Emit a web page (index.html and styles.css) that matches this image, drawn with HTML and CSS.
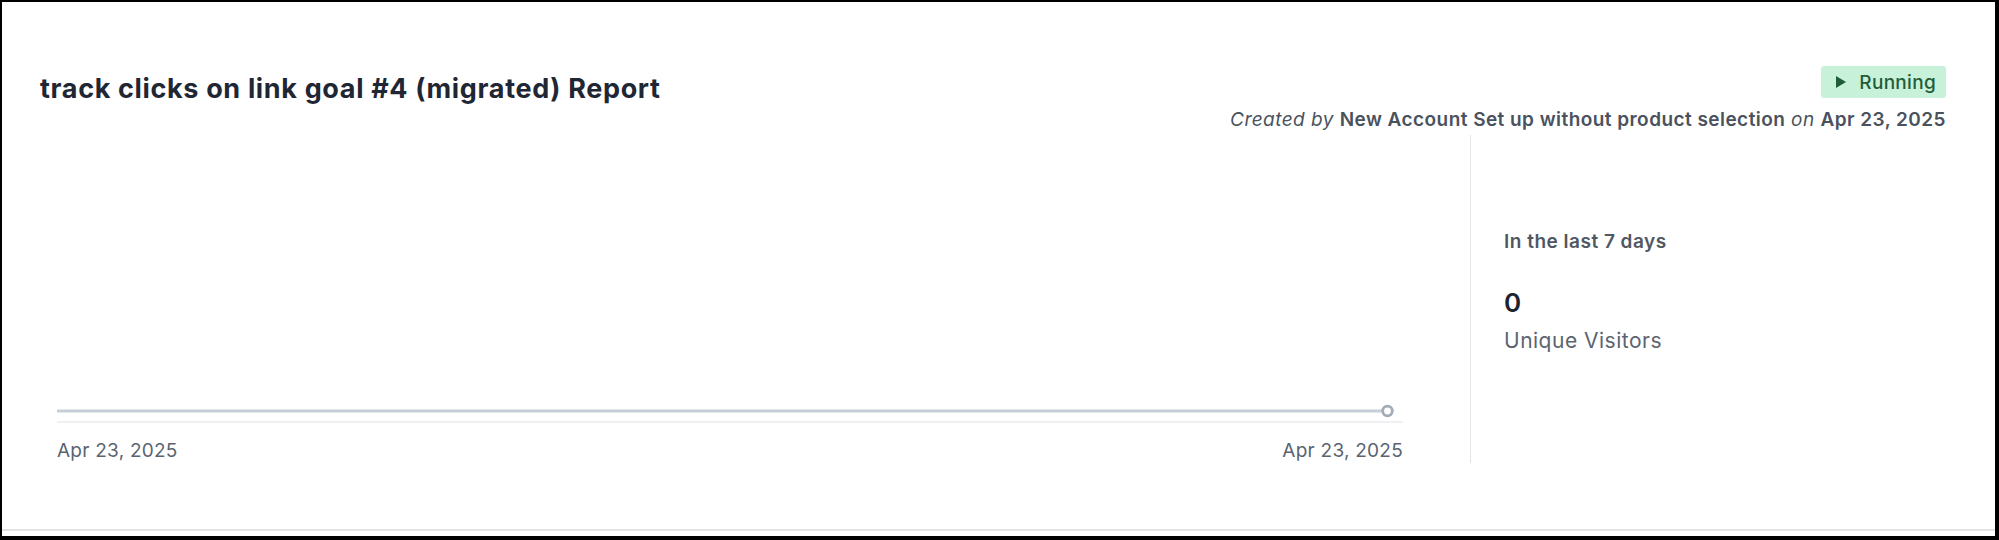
FILE: index.html
```html
<!DOCTYPE html>
<html lang="en">
<head>
<meta charset="utf-8">
<title>Report</title>
<link rel="stylesheet" href="styles.css">
</head>
<body>
<div class="frame">
  <div class="card">
    <header class="header">
      <h1 class="title">track clicks on link goal #4 (migrated) Report</h1>
      <div class="meta">
        <span class="badge">
          <svg class="badge-icon" viewBox="0 0 10 12" width="10" height="12"><path d="M0 0 L10 6 L0 12 Z" fill="currentColor"/></svg>
          Running
        </span>
        <p class="created"><em>Created by</em> <strong>New Account Set up without product selection</strong> <em>on</em> <strong>Apr 23, 2025</strong></p>
      </div>
    </header>
    <section class="body">
      <div class="chart">
        <svg class="chart-line" viewBox="0 0 1346 14" width="1346" height="14">
          <line x1="0" y1="7" x2="1325" y2="7" stroke="#c7ced7" stroke-width="3"/>
          <circle cx="1330.5" cy="7" r="4.8" fill="#fff" stroke="#a3abb6" stroke-width="2.8"/>
        </svg>
        <div class="axis"></div>
        <div class="dates">
          <span>Apr 23, 2025</span>
          <span>Apr 23, 2025</span>
        </div>
      </div>
      <div class="divider"></div>
      <aside class="stats">
        <div class="stats-label">In the last 7 days</div>
        <div class="stats-value">0</div>
        <div class="stats-name">Unique Visitors</div>
      </aside>
    </section>
  </div>
</div>
</body>
</html>
```

FILE: styles.css
```css
html, body {
  margin: 0;
  padding: 0;
  background: #000;
}
body {
  font-family: Inter, "Liberation Sans", sans-serif;
  width: 1999px;
  height: 540px;
  overflow: hidden;
}
.frame {
  margin: 2px 4px 0 2px;
  height: 534px;
  background: #fff;
  padding-bottom: 5px;
  box-sizing: border-box;
}
.card {
  height: 527px;
  border-bottom: 2px solid #e3e4e6;
  box-sizing: content-box;
}
.header {
  display: flex;
  justify-content: space-between;
  align-items: flex-start;
  padding: 64px 49px 0 38px;
}
.title {
  margin: 7px 0 0;
  font-size: 27px;
  line-height: 32px;
  font-weight: 700;
  color: #1f2634;
  letter-spacing: 0.65px;
}
.meta {
  display: flex;
  flex-direction: column;
  align-items: flex-end;
}
.badge {
  display: inline-flex;
  align-items: center;
  height: 32px;
  padding: 0 10px 0 15px;
  background: #c8f1da;
  color: #1f5c38;
  border-radius: 3px;
  font-size: 19px;
  font-weight: 500;
  letter-spacing: 0.3px;
  box-sizing: border-box;
}
.badge-icon {
  margin-right: 13px;
}
.created {
  margin: 10px 0 0;
  font-size: 19px;
  line-height: 24px;
  color: #4a525e;
  letter-spacing: 0.45px;
}
.created em {
  font-style: italic;
  font-weight: 400;
}
.created strong {
  font-weight: 600;
}
.body {
  display: flex;
  height: 328px;
  margin-top: 3px;
}
.chart {
  width: 1346px;
  margin-left: 55px;
  padding-top: 269px;
}
.chart-line {
  display: block;
}
.axis {
  margin-top: 3px;
  height: 2px;
  background: #eef0f2;
}
.dates {
  display: flex;
  justify-content: space-between;
  margin-top: 16px;
  font-size: 19px;
  line-height: 24px;
  color: #5a6470;
  letter-spacing: 0.25px;
}
.divider {
  width: 1px;
  margin-left: 67px;
  background: #e3e4e6;
}
.stats {
  padding: 95px 0 0 33px;
}
.stats-label {
  font-size: 19px;
  line-height: 24px;
  font-weight: 600;
  color: #4f5763;
  letter-spacing: 0.5px;
}
.stats-value {
  margin-top: 33px;
  font-size: 26px;
  line-height: 32px;
  font-weight: 600;
  color: #1c2330;
}
.stats-name {
  margin-top: 8px;
  font-size: 21px;
  line-height: 28px;
  color: #5a6470;
  letter-spacing: 0.5px;
}
```
